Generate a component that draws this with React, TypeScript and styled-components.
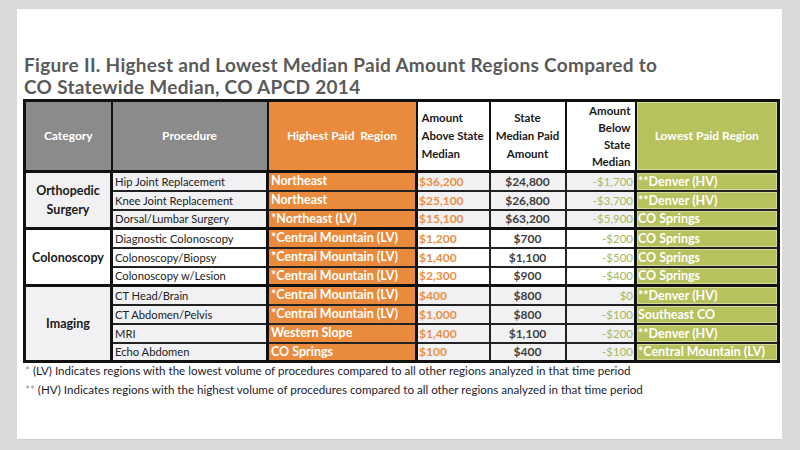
import React from "react";
import styled, { createGlobalStyle } from "styled-components";

const GlobalStyle = createGlobalStyle`
  html, body {
    margin: 0;
    padding: 0;
    background: #d9d9d9;
    font-family: "Lato", "Open Sans", sans-serif;
  }
`;

type Row = [string, string, string, string, string, string];
type Group = { category: string[]; shaded: boolean; rows: Row[] };

const groups: Group[] = [
  {
    category: ["Orthopedic", "Surgery"],
    shaded: true,
    rows: [
      ["Hip Joint Replacement", "Northeast", "$36,200", "$24,800", "-$1,700", "**Denver (HV)"],
      ["Knee Joint Replacement", "Northeast", "$25,100", "$26,800", "-$3,700", "**Denver (HV)"],
      ["Dorsal/Lumbar Surgery", "*Northeast (LV)", "$15,100", "$63,200", "-$5,900", "CO Springs"],
    ],
  },
  {
    category: ["Colonoscopy"],
    shaded: false,
    rows: [
      ["Diagnostic Colonoscopy", "*Central Mountain (LV)", "$1,200", "$700", "-$200", "CO Springs"],
      ["Colonoscopy/Biopsy", "*Central Mountain (LV)", "$1,400", "$1,100", "-$500", "CO Springs"],
      ["Colonoscopy w/Lesion", "*Central Mountain (LV)", "$2,300", "$900", "-$400", "CO Springs"],
    ],
  },
  {
    category: ["Imaging"],
    shaded: true,
    rows: [
      ["CT Head/Brain", "*Central Mountain (LV)", "$400", "$800", "$0", "**Denver (HV)"],
      ["CT Abdomen/Pelvis", "*Central Mountain (LV)", "$1,000", "$800", "-$100", "Southeast CO"],
      ["MRI", "Western Slope", "$1,400", "$1,100", "-$200", "**Denver (HV)"],
      ["Echo Abdomen", "CO Springs", "$100", "$400", "-$100", "*Central Mountain (LV)"],
    ],
  },
];

const App: React.FC = () => {
  return (
    <>
      <GlobalStyle />
      <Slide>
        <Title>
          <TitleLine>Figure II. Highest and Lowest Median Paid Amount Regions Compared to</TitleLine>
          <TitleLine>CO Statewide Median, CO APCD 2014</TitleLine>
        </Title>
        <Table>
          <colgroup>
            <col style={{ width: 87 }} />
            <col style={{ width: 156 }} />
            <col style={{ width: 149 }} />
            <col style={{ width: 73 }} />
            <col style={{ width: 76 }} />
            <col style={{ width: 70 }} />
            <col style={{ width: 143 }} />
          </colgroup>
          <thead>
            <tr>
              <HeadCell $bg="#8b8b8b">Category</HeadCell>
              <HeadCell $bg="#8b8b8b">Procedure</HeadCell>
              <HeadCell $bg="#e98a3d">Highest Paid&nbsp; Region</HeadCell>
              <HeadCell $dark $align="left">
                Amount
                <br />
                Above State
                <br />
                Median
              </HeadCell>
              <HeadCell $dark>
                State
                <br />
                Median Paid
                <br />
                Amount
              </HeadCell>
              <HeadCell $dark $align="right" $tight>
                Amount
                <br />
                Below
                <br />
                State
                <br />
                Median
              </HeadCell>
              <HeadCell $bg="#b7c15d" $inset>
                Lowest Paid Region
              </HeadCell>
            </tr>
          </thead>
          <tbody>
            {groups.map((g) =>
              g.rows.map((r, i) => (
                <BodyRow key={r[0]} $first={i === 0}>
                  {i === 0 && (
                    <CategoryCell rowSpan={g.rows.length} $shaded={g.shaded}>
                      {g.category.map((c, k) => (
                        <div key={k}>{c}</div>
                      ))}
                    </CategoryCell>
                  )}
                  <ProcCell $shaded={g.shaded}>{r[0]}</ProcCell>
                  <HighCell>{r[1]}</HighCell>
                  <AboveCell $shaded={g.shaded}>{r[2]}</AboveCell>
                  <MedianCell $shaded={g.shaded}>{r[3]}</MedianCell>
                  <BelowCell $shaded={g.shaded}>{r[4]}</BelowCell>
                  <LowCell>{r[5]}</LowCell>
                </BodyRow>
              ))
            )}
          </tbody>
        </Table>
        <Notes>
          <Note>
            <Star>*</Star> (LV) Indicates regions with the lowest volume of procedures compared to all other regions analyzed in that time period
          </Note>
          <Note>
            <Star>**</Star> (HV) Indicates regions with the highest volume of procedures compared to all other regions analyzed in that time period
          </Note>
        </Notes>
      </Slide>
    </>
  );
};

export default App;

const Slide = styled.div`
  margin: 9px 18px 0 17px;
  height: 431px;
  background: #ffffff;
  box-sizing: border-box;
  padding: 45px 5px 0 6px;
  border-bottom: 1px solid #cfcfcf;
`;

const Title = styled.h1`
  margin: 0 0 1px 1px;
  font-family: "Lato", sans-serif;
  font-weight: 700;
  font-size: 19px;
  color: #5a5a5a;
  letter-spacing: 0.3px;
`;

const TitleLine = styled.div`
  line-height: 22px;
  white-space: nowrap;
`;

const Table = styled.table`
  width: 754px;
  table-layout: fixed;
  border-collapse: collapse;
  border: 3px solid #111;
  font-family: "Lato", sans-serif;
  font-size: 11.5px;
`;

const HeadCell = styled.th<{ $bg?: string; $dark?: boolean; $align?: string; $tight?: boolean; $inset?: boolean }>`
  height: 66px;
  padding: 0 4px;
  border: 2px solid #111;
  background: ${(p) => p.$bg || "#ffffff"};
  color: ${(p) => (p.$dark ? "#1a1a1a" : "#ffffff")};
  text-align: ${(p) => p.$align || "center"};
  font-size: ${(p) => (p.$dark ? "11.5px" : "12px")};
  font-weight: 700;
  line-height: ${(p) => (p.$tight ? "17px" : "18px")};
  vertical-align: middle;
  overflow: hidden;
  white-space: nowrap;
  box-shadow: ${(p) => (p.$inset ? "inset 0 0 0 1px #d3da9a" : "none")};
`;

const BodyRow = styled.tr<{ $first: boolean }>`
  height: 19px;
  & > td {
    border-top: ${(p) => (p.$first ? "3px solid #111" : "2px solid #222")};
  }
`;

const Cell = styled.td<{ $shaded?: boolean }>`
  border: 2px solid #222;
  padding: 0 2px;
  line-height: 15px;
  white-space: nowrap;
  overflow: hidden;
  background: ${(p) => (p.$shaded ? "#f1f1f3" : "#ffffff")};
`;

const CategoryCell = styled(Cell)`
  border-right: 3px solid #111;
  text-align: center;
  vertical-align: middle;
  font-size: 12.5px;
  font-weight: 700;
  line-height: 19px;
  color: #1a1a1a;
`;

const ProcCell = styled(Cell)`
  color: #222;
  font-size: 11.2px;
`;

const HighCell = styled(Cell)`
  background: #e98a3d;
  color: #ffffff;
  font-weight: 700;
  font-size: 12.5px;
  vertical-align: top;
  border-left: 3px solid #111;
  border-right: 3px solid #111;
`;

const AboveCell = styled(Cell)`
  color: #ea8e45;
  font-weight: 700;
  font-size: 12px;
  padding-left: 1px;
`;

const MedianCell = styled(Cell)`
  color: #3f3f3f;
  font-weight: 700;
  font-size: 12px;
  text-align: center;
`;

const BelowCell = styled(Cell)`
  color: #a9b85a;
  font-size: 11.5px;
  text-align: right;
  padding-right: 1px;
`;

const LowCell = styled(Cell)`
  background: #b7c15d;
  color: #ffffff;
  font-weight: 700;
  font-size: 12.5px;
  border-left: 3px solid #111;
  padding-left: 1px;
  box-shadow: inset 0 0 0 1px #d3da9a;
`;

const Notes = styled.div`
  display: flex;
  flex-direction: column;
  gap: 4px;
  margin: 0 0 0 2px;
  font-family: "Lato", sans-serif;
  font-size: 11.6px;
  color: #1c1c2c;
`;

const Note = styled.div`
  line-height: 15px;
`;

const Star = styled.span`
  color: #9a9a9a;
`;
